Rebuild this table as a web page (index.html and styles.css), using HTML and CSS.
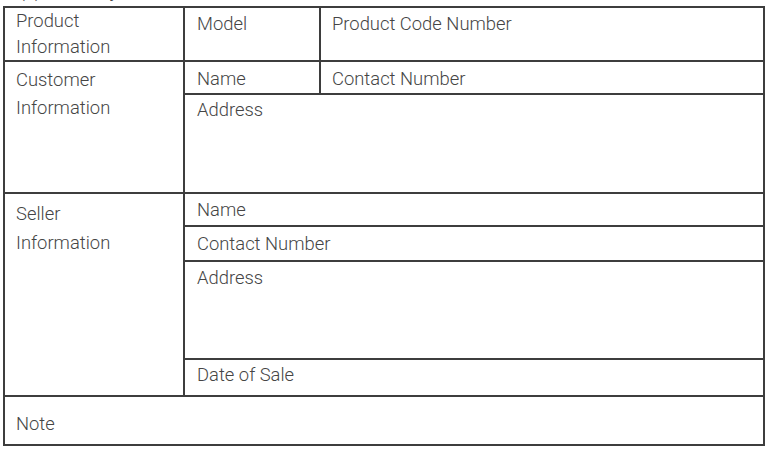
FILE: index.html
```html
<!DOCTYPE html>
<html lang="en">
<head>
<meta charset="utf-8">
<title>Warranty Card</title>
<link rel="stylesheet" href="styles.css">
</head>
<body>
<div class="page">
  <div class="caption">(3) Warranty Card</div>
  <div class="card">
    <div class="cell head head-product">Product<br>Information</div>
    <div class="cell col2 r1">Model</div>
    <div class="cell col3 r1">Product Code Number</div>

    <div class="cell head head-customer">Customer<br>Information</div>
    <div class="cell col2 r2">Name</div>
    <div class="cell col3 r2">Contact Number</div>
    <div class="cell wide r3">Address</div>

    <div class="cell head head-seller">Seller<br>Information</div>
    <div class="cell wide r4">Name</div>
    <div class="cell wide r5">Contact Number</div>
    <div class="cell wide r6">Address</div>
    <div class="cell wide r7">Date of Sale</div>

    <div class="cell note">Note</div>
  </div>
</div>
</body>
</html>
```

FILE: styles.css
```css
html, body {
  margin: 0;
  padding: 0;
  background: #ffffff;
}

body {
  font-family: Roboto, "Liberation Sans", sans-serif;
  font-weight: 300;
  font-size: 18.4px;
  color: #454545;
}

.page {
  display: flex;
  flex-direction: column;
  padding: 0 2px 0 3px;
}

.caption {
  margin-top: -24px;
  height: 30px;
  line-height: 30px;
  padding-left: 16px;
  white-space: nowrap;
}

.card {
  width: 758px;
  display: grid;
  grid-template-columns: 178px 134px 442px;
  grid-template-rows: 52px 31px 97px 31px 33px 96px 35px 47px;
  gap: 2px;
  padding: 2px;
  background: #3d3d3d;
}

.cell {
  background: #ffffff;
  padding: 3px 11px 0 11px;
  line-height: 26px;
  white-space: nowrap;
}

.col2 { grid-column: 2; padding-left: 12px; }
.col3 { grid-column: 3; }
.wide { grid-column: 2 / 4; padding-left: 12px; }

.r1 { grid-row: 1; }
.r2 { grid-row: 2; padding-top: 4px; }
.r3 { grid-row: 3; padding-top: 2px; }
.r4 { grid-row: 4; padding-top: 3px; }
.r5 { grid-row: 5; padding-top: 4px; }
.r6 { grid-row: 6; padding-top: 3px; }
.r7 { grid-row: 7; padding-top: 2px; }

.head {
  grid-column: 1;
  line-height: 28px;
}

.head-product {
  grid-row: 1;
  line-height: 26px;
  padding-top: 0;
}

.head-customer {
  grid-row: 2 / 4;
  padding-top: 4px;
}

.head-seller {
  grid-row: 4 / 8;
  padding-top: 5px;
  line-height: 29px;
}

.note {
  grid-column: 1 / 4;
  grid-row: 8;
  padding-top: 14px;
}
```
